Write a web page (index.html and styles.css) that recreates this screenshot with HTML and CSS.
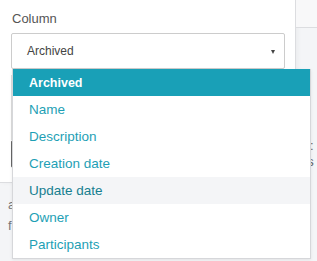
FILE: index.html
```html
<!DOCTYPE html>
<html lang="en">
<head>
    <meta charset="UTF-8">
    <title>Column filter</title>
    <link rel="stylesheet" href="styles.css">
</head>
<body>

<div class="page">
    <div class="panel">
        <label class="field-label">Column</label>
        <div class="select">
            <span>Archived</span>
            <span class="caret"></span>
        </div>
        <div class="field-box"></div>
        <div class="field-button"></div>
    </div>
    <div class="side">
        <div class="side-head"></div>
        <p class="side-text">Is: as<br>in</p>
    </div>
</div>

<div class="below">
    <p>a</p>
    <p>f</p>
</div>

<ul class="dropdown">
    <li class="active">Archived</li>
    <li>Name</li>
    <li>Description</li>
    <li>Creation date</li>
    <li class="hover">Update date</li>
    <li>Owner</li>
    <li>Participants</li>
</ul>

</body>
</html>
```

FILE: styles.css
```css
body {
    margin: 0;
    background: #f4f5f7;
    font-family: 'Liberation Sans', Arial, sans-serif;
    color: #555;
    width: 317px;
    height: 261px;
    overflow: hidden;
    position: relative;
}
.page {
    display: flex;
}
.panel {
    width: 296px;
    height: 183px;
    background: #fff;
    border-right: 1px solid #dcdde0;
    border-bottom: 1px solid #dcdde0;
    padding: 11px 0 0 11px;
    box-sizing: border-box;
    box-shadow: 2px 0 4px rgba(0, 0, 0, 0.04);
}
.field-label {
    display: block;
    font-size: 13px;
    line-height: 16px;
    color: #555;
    margin-left: 1px;
}
.select {
    margin-top: 6px;
    width: 274px;
    height: 36px;
    border: 1px solid #ccc;
    border-radius: 2px;
    box-sizing: border-box;
    display: flex;
    align-items: center;
    justify-content: space-between;
    padding: 0 9px 0 15px;
    font-size: 12px;
    color: #444;
}
.caret {
    width: 0;
    height: 0;
    border-left: 2.5px solid transparent;
    border-right: 2.5px solid transparent;
    border-top: 4px solid #444;
    margin-top: 2px;
}
.field-box {
    margin-top: 6px;
    width: 274px;
    height: 65px;
    border: 1px solid #ddd;
    box-sizing: border-box;
}
.field-button {
    width: 274px;
    height: 28px;
    border: 1px solid #666;
    border-radius: 2px;
    box-sizing: border-box;
}
.side {
    flex: 1;
}
.side-head {
    height: 27px;
    background: #f8f8f9;
    border-bottom: 1px solid #dcdde0;
}
.side-text {
    margin: 110px 0 0 4px;
    font-size: 13px;
    line-height: 16px;
    color: #666;
}
.below {
    padding: 11px 0 0 8px;
    font-size: 13px;
    color: #777;
}
.below p {
    margin: 0 0 6px;
    line-height: 15px;
}
.dropdown {
    position: absolute;
    top: 69px;
    left: 12px;
    width: 299px;
    margin: 0;
    padding: 0;
    list-style: none;
    background: #fff;
    border: 1px solid #d6d7da;
    border-top: none;
    box-sizing: border-box;
    box-shadow: 0 1px 3px rgba(0, 0, 0, 0.08);
}
.dropdown li {
    height: 27px;
    line-height: 28px;
    padding-left: 16px;
    font-size: 13.5px;
    color: #1e9fb5;
}
.dropdown li.active {
    background: #19a0b7;
    color: #fff;
    font-weight: bold;
    font-size: 12.5px;
}
.dropdown li.hover {
    background: #f4f5f7;
    color: #177f90;
}
```
